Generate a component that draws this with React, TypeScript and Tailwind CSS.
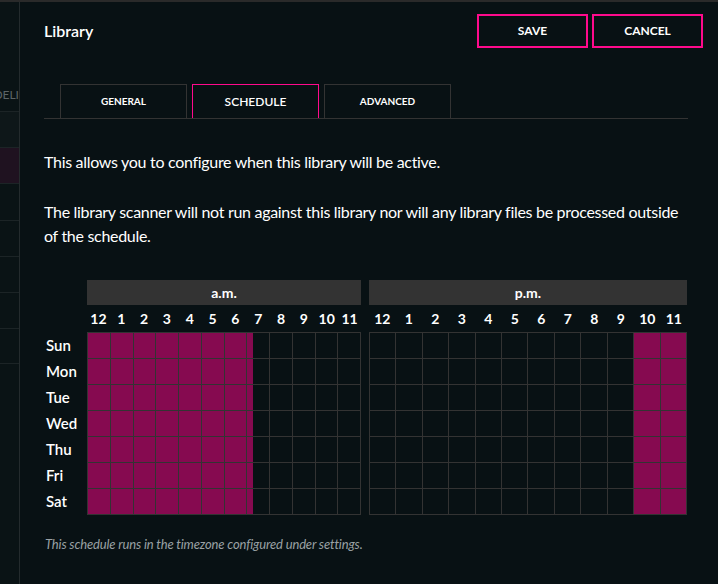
import { Fragment } from "react";

const DAYS = ["Sun", "Mon", "Tue", "Wed", "Thu", "Fri", "Sat"];
const HOURS = ["12", "1", "2", "3", "4", "5", "6", "7", "8", "9", "10", "11"];

// quarter-hour slots, 0..95; active from midnight to 7:15 and from 10 p.m.
const isActive = (q: number) => q < 29 || q >= 88;

function Block({ label, offset, width }: { label: string; offset: number; width: string }) {
  return (
    <div className={`flex flex-col ${width}`}>
      <div className="h-[25px] bg-[#333333] flex items-center justify-center text-[14px] font-bold text-white">
        {label}
      </div>
      <div className="grid grid-cols-12 h-[27px] items-center">
        {HOURS.map((h) => (
          <span key={h} className="text-center text-[14px] font-bold text-white">
            {h}
          </span>
        ))}
      </div>
      <div className="grid grid-cols-12 gap-px p-px bg-[#333333]">
        {DAYS.map((d) => (
          <Fragment key={d}>
            {HOURS.map((h, i) => {
              const base = (offset + i) * 4;
              return (
                <div key={h} className="flex h-[25px] bg-[#081114]">
                  {[0, 1, 2, 3].map((k) => (
                    <div key={k} className={`flex-1 ${isActive(base + k) ? "bg-[#860a50]" : ""}`} />
                  ))}
                </div>
              );
            })}
          </Fragment>
        ))}
      </div>
    </div>
  );
}

export default function App() {
  return (
    <div className="w-[718px] h-[584px] overflow-hidden bg-[#081114] border-t-2 border-[#2a2a2a] flex font-['Lato',sans-serif] text-white">
      {/* page behind the dialog */}
      <div className="w-[20px] shrink-0 border-r border-[#242b2d] bg-[#0a1315] flex flex-col overflow-hidden">
        <div className="h-[109px] flex items-end justify-end pb-[7px]">
          <span className="text-[12px] text-[#5c6466] whitespace-nowrap">DELI</span>
        </div>
        <div className="h-[36px] border-t border-[#1c2426] bg-[#0e1719]" />
        <div className="h-[36px] border-t border-[#1c2426] bg-[#1f1220]" />
        <div className="h-[37px] border-t border-[#1c2426]" />
        <div className="h-[36px] border-t border-[#1c2426]" />
        <div className="h-[36px] border-t border-[#1c2426]" />
        <div className="h-[36px] border-t border-[#1c2426]" />
        <div className="h-[36px] border-t border-[#1c2426] border-b" />
      </div>

      {/* dialog */}
      <div className="flex-1 flex flex-col pl-[24px] pr-[15px] pt-[12px]">
        <div className="flex items-center justify-between">
          <h2 className="text-[16px] font-semibold">Library</h2>
          <div className="flex gap-[4px]">
            <button className="w-[111px] h-[34px] border-2 border-[#ff0a8c] text-[12px] font-bold">SAVE</button>
            <button className="w-[111px] h-[34px] border-2 border-[#ff0a8c] text-[12px] font-bold">CANCEL</button>
          </div>
        </div>

        <div className="mt-[36px] mr-[15px] flex gap-[5px] pl-[16px] border-b border-[#333333]">
          <button className="w-[127px] h-[34px] border border-b-0 border-[#333333] text-[10px] font-bold">GENERAL</button>
          <button className="w-[127px] h-[34px] border border-b-0 border-[#ff0a8c] text-[12px] font-semibold">SCHEDULE</button>
          <button className="w-[127px] h-[34px] border border-b-0 border-[#333333] text-[10px] font-bold">ADVANCED</button>
        </div>

        <p className="mt-[31px] text-[16px] leading-[24px] tracking-[-0.3px]">
          This allows you to configure when this library will be active.
        </p>
        <p className="mt-[26px] mr-[15px] text-[16px] leading-[24px] tracking-[-0.3px]">
          The library scanner will not run against this library nor will any library files be processed outside of the schedule.
        </p>

        <div className="mt-[32px] flex">
          <div className="w-[43px] pt-[53px] flex flex-col gap-px">
            {DAYS.map((d) => (
              <span key={d} className="h-[25px] flex items-center pl-[2px] text-[15px] font-semibold">
                {d}
              </span>
            ))}
          </div>
          <Block label="a.m." offset={0} width="w-[274px]" />
          <div className="w-[8px]" />
          <Block label="p.m." offset={12} width="w-[318px]" />
        </div>

        <p className="mt-[20px] ml-[1px] text-[13px] italic tracking-[-0.15px] text-[#9aa1a4]">
          This schedule runs in the timezone configured under settings.
        </p>
      </div>
    </div>
  );
}
